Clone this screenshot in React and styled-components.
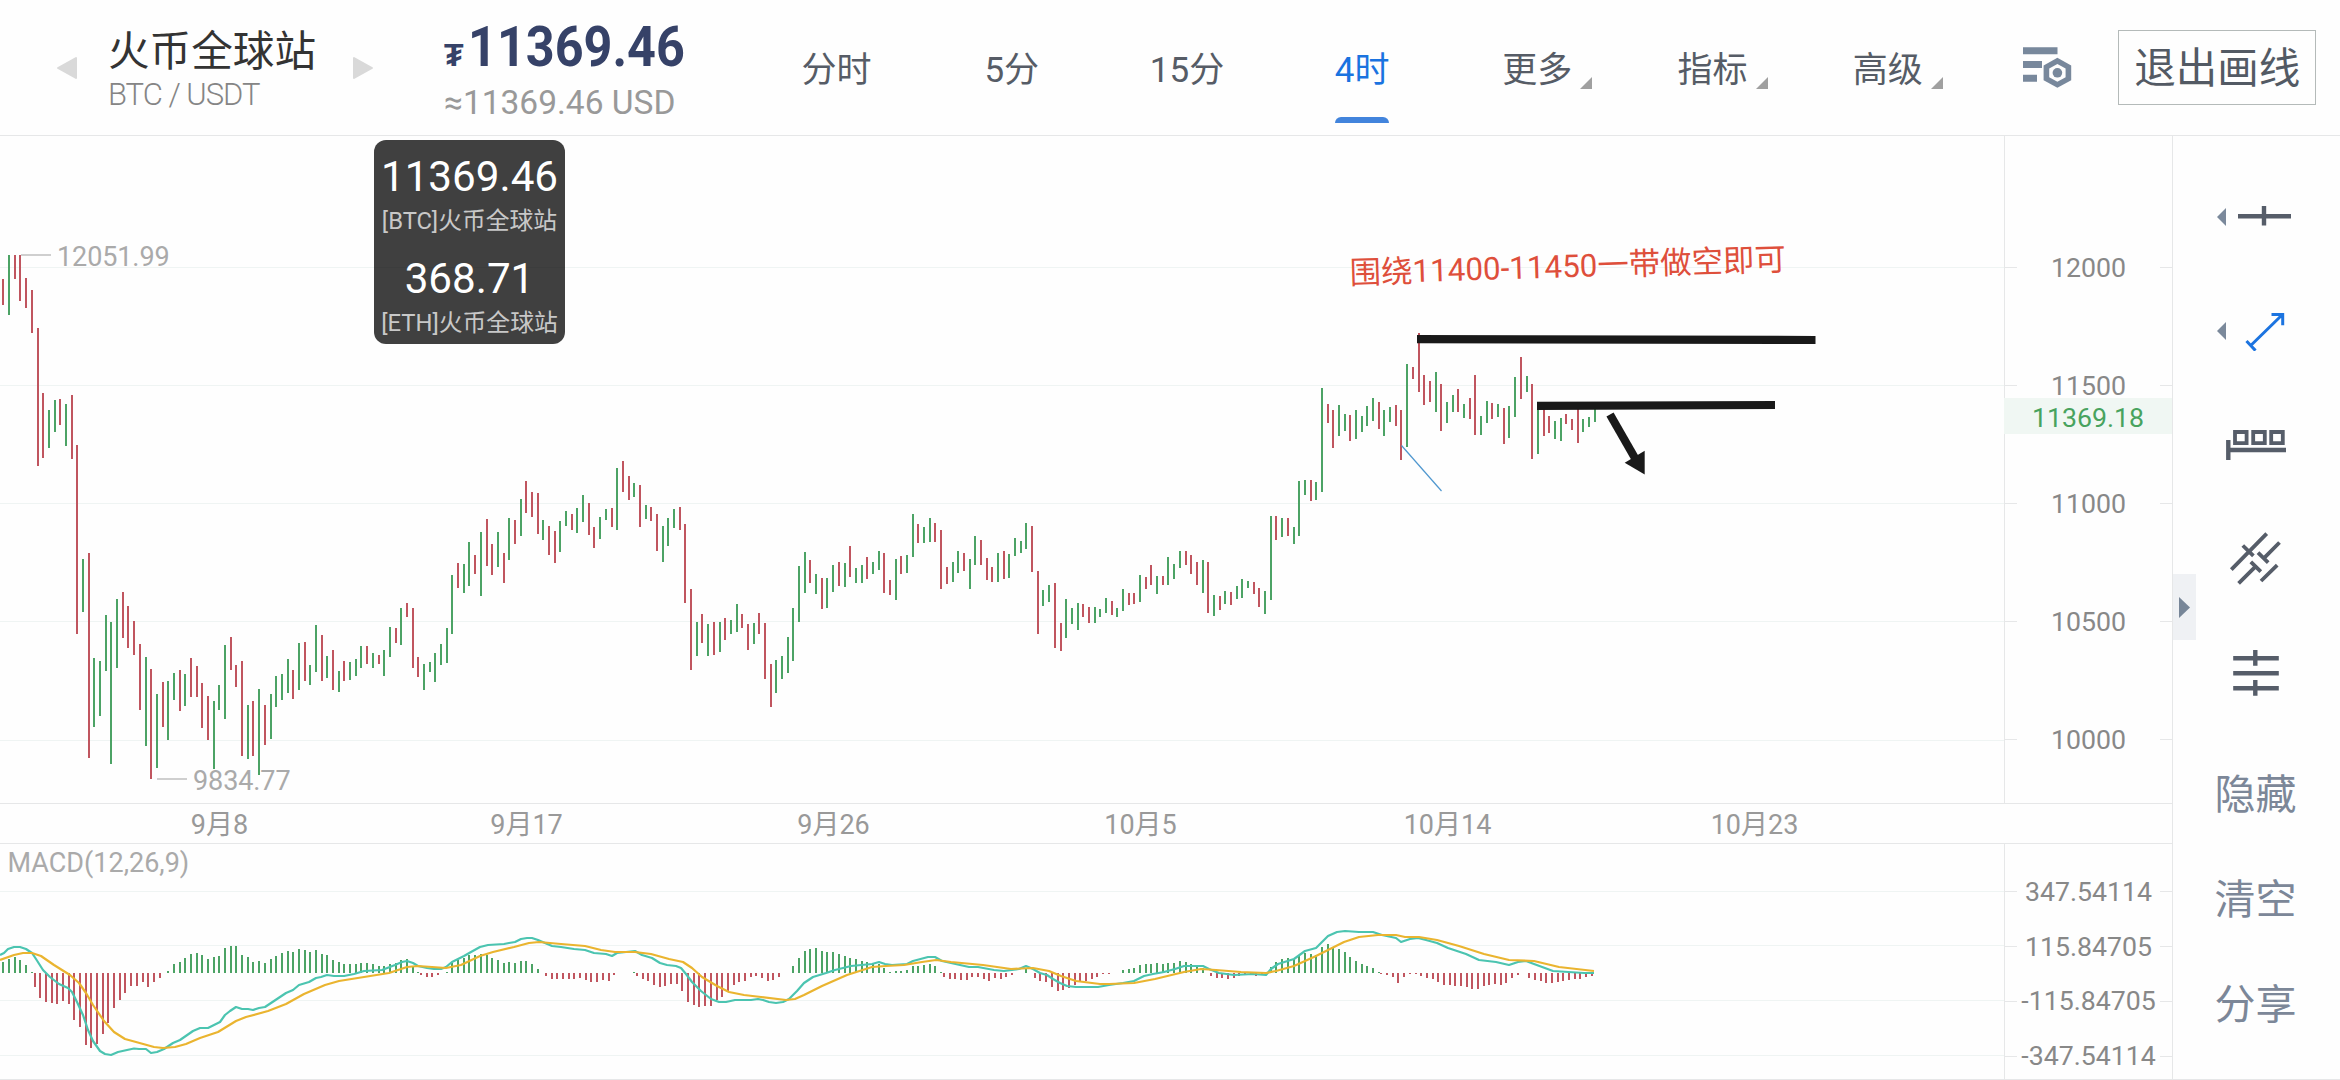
import React from 'react';
import styled, { createGlobalStyle } from 'styled-components';

const GlobalStyle = createGlobalStyle`
    body {
        margin: 0;
        background: #fefefe;
        font-family: Roboto, 'Noto Sans CJK SC', sans-serif;
    }
`;

const GREEN = '#4ca365';
const RED = '#c0555f';
const LINE = '#e6e7e8';
const GRID = '#eff4f3';

// x, high, low, up
const candles = [
    [3,279,305,0],[9,255,315,1],[15,255,279,0],[20,255,301,0],[26,278,308,0],[32,290,333,0],[38,328,466,0],
    [43,393,458,0],[49,410,448,1],[55,400,432,1],[60,399,425,0],[66,404,446,1],[72,395,459,0],[77,445,634,0],
    [83,559,612,1],[89,553,758,0],[94,658,727,1],[100,661,716,1],[106,615,671,1],[111,622,764,1],[117,599,668,1],
    [123,592,638,0],[128,606,648,0],[134,621,655,0],[140,644,710,0],[146,657,746,1],[151,669,779,0],[157,694,768,1],
    [163,682,727,0],[168,681,740,1],[174,673,700,1],[180,670,711,0],[185,674,706,1],[191,658,697,0],[197,666,697,0],
    [202,683,728,0],[208,696,740,0],[214,701,769,1],[219,685,710,1],[225,645,719,1],[231,637,670,0],[236,665,687,0],
    [242,661,756,0],[248,705,759,1],[253,701,756,0],[259,689,775,1],[265,705,745,0],[271,694,739,1],[276,676,707,1],
    [282,674,700,1],[288,659,693,1],[293,670,699,0],[299,643,690,1],[305,642,681,0],[310,665,685,1],[316,625,672,1],
    [322,635,681,0],[327,656,678,1],[333,650,690,0],[339,671,692,1],[344,661,681,0],[350,662,680,1],[356,659,676,1],
    [361,646,668,1],[367,646,664,0],[373,653,668,1],[379,655,664,0],[384,650,676,1],[390,627,657,1],[396,628,643,0],
    [401,608,645,1],[407,603,617,0],[413,608,668,0],[418,657,677,0],[424,664,690,1],[430,662,672,1],[435,653,682,1],
    [441,644,665,1],[447,628,663,1],[452,575,634,1],[458,563,588,0],[464,564,593,1],[469,542,586,1],[475,555,574,0],
    [481,532,596,1],[487,519,566,0],[492,544,575,0],[498,532,567,1],[504,553,583,0],[509,518,560,1],[515,520,544,0],
    [521,499,536,1],[526,481,513,0],[532,492,517,0],[538,493,534,0],[543,520,540,1],[549,526,555,0],[555,531,563,0],
    [560,521,552,1],[566,511,526,1],[572,514,530,0],[577,508,533,1],[583,495,522,1],[589,503,535,0],[594,527,548,0],
    [600,517,539,1],[606,509,520,1],[612,508,527,0],[617,468,530,1],[623,461,492,0],[629,476,500,0],[634,483,497,1],
    [640,485,527,0],[646,505,519,1],[651,507,521,0],[657,514,551,0],[663,526,562,1],[668,518,546,1],[674,509,528,1],
    [680,507,530,0],[685,524,603,0],[691,589,670,0],[697,622,656,1],[702,614,643,0],[708,624,656,1],[714,622,655,0],
    [720,622,652,1],[725,618,640,0],[731,620,634,1],[737,604,632,1],[742,614,628,0],[748,624,650,0],[754,623,644,1],
    [759,613,634,0],[765,623,679,0],[771,664,707,0],[776,660,693,1],[782,656,679,1],[788,637,673,1],[793,608,661,1],
    [799,566,622,1],[805,552,593,1],[810,560,583,0],[816,574,594,1],[822,578,609,0],[827,578,608,1],[833,565,592,1],
    [839,562,586,0],[845,563,587,1],[850,546,577,0],[856,568,583,1],[862,565,583,1],[867,557,579,0],[873,562,574,1],
    [879,551,570,1],[884,553,593,0],[890,580,595,0],[896,559,600,1],[901,556,574,0],[907,555,573,1],[913,514,557,1],
    [918,524,543,0],[924,527,543,1],[930,518,542,1],[935,523,542,0],[941,530,589,0],[947,567,584,0],[953,562,582,1],
    [958,551,573,1],[964,553,571,0],[970,559,589,1],[975,536,565,1],[981,540,565,0],[987,558,580,0],[992,567,582,0],
    [998,553,582,1],[1004,551,579,0],[1009,554,578,1],[1015,538,556,1],[1021,541,553,1],[1026,523,549,1],[1032,526,572,0],
    [1038,571,634,0],[1043,590,606,1],[1049,585,602,1],[1055,583,648,0],[1061,623,651,0],[1066,599,638,1],[1072,608,624,1],
    [1078,603,630,1],[1083,604,617,0],[1089,607,623,0],[1095,607,623,1],[1100,609,617,1],[1106,598,613,1],[1112,601,615,0],
    [1117,608,617,1],[1123,589,611,1],[1129,593,605,0],[1134,593,604,0],[1140,575,602,1],[1146,577,589,0],[1151,565,585,0],
    [1157,576,594,1],[1163,576,585,0],[1168,557,585,1],[1174,564,579,1],[1180,551,568,1],[1186,551,565,0],[1191,555,574,0],
    [1197,562,585,0],[1203,560,593,1],[1208,562,613,0],[1214,595,616,1],[1220,596,610,0],[1225,591,604,1],[1231,592,605,0],
    [1237,586,599,1],[1242,579,598,1],[1248,581,588,1],[1254,582,594,0],[1259,588,607,0],[1265,591,614,1],[1271,516,600,1],
    [1276,516,540,0],[1282,518,537,1],[1288,518,536,0],[1294,527,544,1],[1299,481,536,1],[1305,480,495,1],[1311,480,501,0],
    [1316,482,500,1],[1322,388,492,1],[1328,404,423,0],[1333,410,448,0],[1339,405,436,1],[1345,414,431,1],[1350,415,441,0],
    [1356,410,439,1],[1362,416,432,1],[1367,406,426,1],[1373,398,421,1],[1379,402,429,0],[1384,410,436,1],[1390,407,422,1],
    [1396,405,426,0],[1401,410,460,0],[1407,364,447,1],[1413,367,379,0],[1419,333,392,0],[1424,375,405,0],[1430,381,402,0],
    [1436,372,412,1],[1441,384,431,0],[1447,402,423,1],[1453,395,412,1],[1458,389,412,0],[1464,404,418,1],[1470,398,419,0],
    [1475,375,435,0],[1481,416,435,1],[1487,401,423,1],[1492,403,419,0],[1498,404,417,1],[1504,408,444,0],[1509,406,438,1],
    [1515,377,417,1],[1521,357,399,0],[1527,376,392,1],[1532,384,459,0],[1538,405,454,1],[1544,405,436,0],[1549,416,433,0],
    [1555,421,439,1],[1561,418,441,1],[1566,414,424,0],[1572,419,430,0],[1578,409,443,0],[1583,419,432,1],[1589,417,427,1],
    [1595,409,422,1],
];

// one MACD histogram value per candle
const histogram = [
    11,14,16,13,8,1,
    -14,-25,-29,-30,-31,-28,-31,-47,-54,-72,-75,-71,-61,-50,-35,-27,-20,-13,-13,-9,-14,-9,-5,
    2,9,11,15,19,20,18,14,16,17,25,27,27,18,16,11,12,10,14,17,20,22,21,24,23,21,23,19,18,13,11,
    9,9,9,10,10,9,7,7,9,10,13,14,6,1,-2,-4,-4,-2,1,10,13,15,18,18,19,18,15,13,10,11,10,12,12,9,4,0,
    -3,-6,-6,-6,-6,-6,-5,-7,-9,-9,-7,-8,-2,0,0,1,
    -3,-6,-8,-12,-14,-13,-11,-11,-18,-29,-32,-34,-33,-33,-27,-24,-19,-12,-9,-8,-4,-3,-5,-8,-7,-4,0,
    7,15,22,24,25,22,21,21,19,17,15,14,12,11,10,9,5,1,2,2,3,7,7,8,9,7,1,
    -4,-6,-6,-7,-7,-4,-4,-6,-8,-5,-6,-4,-2,0,4,0,-5,-8,-9,-14,-18,-17,-15,-12,-8,-8,-6,-4,-1,-1,0,
    3,4,5,8,9,9,10,9,10,10,12,11,9,6,5,0,-3,-5,-5,-6,-5,-3,-2,-1,-3,-2,
    6,11,14,15,14,18,20,19,18,26,29,26,24,21,16,12,9,7,5,1,
    -1,-2,-4,-10,-4,-1,-1,-3,-5,-6,-9,-12,-12,-13,-13,-14,-16,-16,-13,-12,-11,-12,-10,-5,-2,0,
    -5,-7,-8,-10,-10,-9,-8,-7,-6,-6,-4,-3,
];

const difLine = `0,955 4,953 8,949 14,947 20,947 26,949 32,953 36,959 43,970 50,977 59,984 68,988 72,992 77,1002 83,1015
    88,1030 93,1041 100,1051 105,1054 111,1055 118,1052 127,1050 134,1048.5 139,1049 146,1049 151,1053 157,1052 164,1049
    173,1043 180,1040 193,1031 200,1028 208,1028 214,1025 220,1022 225,1015 230,1011 236,1007 242,1009 248,1009 253,1010
    259,1008 265,1007 271,1003 286,993 293,990 299,985 309,982 316,978 321,977 327,975 334,976 344,976 354,974 364,971
    382,970 395,965 402,962 407,961 413,963 418,966 427,968 434,969 441,969 446,967 452,962 458,959 464,956 471,952
    480,947 488,945 504,944 509,943 515,942 521,939 527,938 532,938 538,940 552,946 561,947 574,949 585,950 594,953
    606,954 612,956 617,953 626,952 635,951 642,955 652,958 660,963 667,965 676,966 681,968 686,974 692,982 701,991
    711,999 719,1002 726,1002 735,1000 751,1000 758,999 763,1000 769,1002 776,1003 783,1002 789,999 797,991 804,983
    813,977 826,973 835,970 851,966 872,964 879,962 885,964 892,965 907,964 913,961 928,957 935,957 942,961 951,963
    969,967 978,967 994,970 1004,971 1019,969 1026,966 1033,969 1040,973 1047,975 1053,979 1060,983 1067,986 1076,987
    1098,987 1109,985 1123,983 1134,981 1144,976 1153,974 1164,972 1175,969 1184,966 1203,966 1209,969 1219,973
    1234,975 1253,974 1266,975 1271,969 1278,964 1294,959 1305,951 1316,948 1322,942 1328,936 1337,932 1345,931
    1359,932 1373,932 1382,935 1396,938 1401,942 1410,939 1418,938 1426,940 1437,943 1448,948 1466,954 1479,960
    1496,962 1509,965 1518,962 1526,961 1534,964 1553,971 1584,973 1594,973`;

const deaLine = `0,960 14,955 23,953 32,953 41,956 54,965 70,975 79,983 86,993 93,1005 104,1021 114,1032 125,1039 136,1042
    154,1047 163,1048 175,1047 186,1044 200,1038 218,1032 236,1021 246,1017 268,1011 286,1004 304,994 325,985 339,981
    364,977 389,973 407,967 418,966 446,968 461,965 480,956 493,952 514,947 529,943 539,942 561,944 585,946 601,950
    615,952 635,952 651,954 669,959 683,962 692,968 702,977 717,986 729,992 744,995 761,997 786,1000 795,999 804,995
    822,986 847,975 872,967 886,966 904,965 922,962 936,960 951,962 983,965 1011,969 1033,968 1049,971 1061,976
    1076,981 1100,984 1109,984 1134,983 1155,979 1184,972 1201,969 1216,970 1241,972 1266,973 1276,971 1294,966
    1316,956 1326,951 1344,942 1359,937 1378,935 1396,935 1405,937 1419,937 1437,940 1459,946 1484,954 1509,960
    1534,961 1559,967 1594,971`;

const Page = styled.div`
    display: flex;
    flex-direction: column;
    width: 2340px;
    height: 1080px;
    box-sizing: border-box;
    overflow: hidden;
    border-bottom: 1px solid ${LINE};
`;

const Header = styled.header`
    display: flex;
    align-items: center;
    height: 135px;
    flex: none;
    border-bottom: 1px solid ${LINE};
`;

const Market = styled.div`
    display: flex;
    align-items: center;
    width: 388px;
    padding-left: 56px;
    box-sizing: content-box;
`;

const MarketName = styled.div`
    width: 244px;
    margin-left: 30px;
`;

const Exchange = styled.div`
    font-size: 41.6px;
    line-height: 52px;
    margin-top: 3px;
    color: #333;
`;

const Pair = styled.div`
    font-size: 31px;
    line-height: 34px;
    font-weight: 300;
    letter-spacing: -1px;
    color: #858585;
`;

const Quote = styled.div`
    width: 305px;
`;

const LastPrice = styled.div`
    display: flex;
    align-items: baseline;
    height: 62px;
    line-height: 62px;
    margin-top: 5px;
    font-weight: 700;
    color: #364268;
    white-space: nowrap;
`;

const Tether = styled.span`
    width: 24px;
    font-size: 32px;
`;

const PriceDigits = styled.span`
    font-size: 55.5px;
    transform: scaleX(0.907);
    transform-origin: left;
`;

const UsdPrice = styled.div`
    font-size: 33.5px;
    line-height: 40px;
    margin-top: 4px;
    color: #999;
`;

const Tabs = styled.nav`
    display: flex;
    height: 100%;
`;

const Tab = styled.div`
    display: flex;
    flex-direction: column;
    align-items: center;
    justify-content: flex-end;
    width: 175.2px;
    font-size: 35px;
    line-height: 50px;
    color: ${props => props.$active ? '#1a73e0' : '#565c66'};
`;

const TabLabel = styled.div`
    position: relative;
`;

const Corner = styled.svg`
    position: absolute;
    right: -20px;
    bottom: 7px;
`;

const Underline = styled.div`
    width: 54px;
    height: 6px;
    margin: 21px 0 12px;
    border-radius: 6px 6px 0 0;
    background: ${props => props.$active ? '#4284dc' : 'transparent'};
`;

const SettingsIcon = styled.svg`
    margin-left: 48px;
`;

const ExitButton = styled.button`
    width: 198px;
    height: 75px;
    margin-left: 46px;
    padding: 3px 0 0;
    border: 1px solid #b4bab9;
    background: none;
    font: 41.5px/1 Roboto, 'Noto Sans CJK SC', sans-serif;
    color: #535a64;
`;

const Body = styled.main`
    display: flex;
    flex: 1;
    position: relative;
`;

const Charts = styled.section`
    width: 2172px;
    border-right: 1px solid ${LINE};
`;

const Panel = styled.div`
    display: flex;
    position: relative;
    height: ${props => props.$height}px;
`;

const Plot = styled.svg`
    display: block;
    flex: none;
`;

const Axis = styled.div`
    width: 168px;
    padding-top: ${props => props.$top}px;
    box-sizing: border-box;
    border-left: 1px solid ${LINE};
`;

const Tick = styled.div`
    display: flex;
    align-items: center;
    justify-content: space-between;
    height: ${props => props.$height}px;
    font-size: 26.7px;
    color: #888;

    &::before,
    &::after {
        content: '';
        width: 12px;
        height: 1px;
        background: ${LINE};
    }
`;

const CurrentPrice = styled.div`
    position: absolute;
    left: 2004px;
    top: 262px;
    width: 168px;
    height: 36px;
    background: #f0f7f3;
    color: #48a35e;
    font-size: 26.7px;
    line-height: 40px;
    text-align: center;
`;

const DateAxis = styled.div`
    display: flex;
    height: 39px;
    padding-left: 66px;
    border-top: 1px solid ${LINE};
    border-bottom: 1px solid ${LINE};
`;

const DateLabel = styled.div`
    width: 307px;
    font-size: 27px;
    line-height: 42px;
    text-align: center;
    color: #999;
`;

const Tooltip = styled.div`
    position: absolute;
    left: 374px;
    top: 4px;
    width: 191px;
    height: 204px;
    border-radius: 12px;
    background: rgba(0, 0, 0, 0.75);
    text-align: center;
    white-space: nowrap;
`;

const TipPrice = styled.div`
    height: 46px;
    padding-top: 14px;
    font-size: 42.2px;
    line-height: 46px;
    color: #fff;
`;

const TipName = styled.div`
    height: 42px;
    font-size: 23.8px;
    line-height: 43px;
    color: #c8c8c8;
`;

const Tools = styled.aside`
    display: flex;
    flex-direction: column;
    width: 165px;
    padding: 24px 2px 0 0;
`;

const Tool = styled.div`
    display: flex;
    align-items: center;
    justify-content: center;
    height: 114px;
`;

const ToolActions = styled.div`
    padding-top: 12.5px;
`;

const ToolAction = styled.div`
    height: 105px;
    font-size: 41px;
    line-height: 105px;
    text-align: center;
    color: #7c8798;
`;

const Handle = styled.div`
    position: absolute;
    left: 2173px;
    top: 438px;
    display: flex;
    align-items: center;
    padding-left: 6px;
    width: 17px;
    height: 66px;
    background: #eff1f4;
`;

const tabs = [
    { label: '分时' },
    { label: '5分' },
    { label: '15分' },
    { label: '4时', active: true },
    { label: '更多', menu: true },
    { label: '指标', menu: true },
    { label: '高级', menu: true },
];

function ArrowIcon({ right }) {
    return (
        <svg width="22" height="24" viewBox="0 0 22 24">
            <path
                d={right ? 'M2 2v20L20 12z' : 'M20 2v20L2 12z'}
                fill="#d9d9d9" stroke="#d9d9d9" strokeWidth="2" strokeLinejoin="round"
            />
        </svg>
    );
}

function TopBar() {
    return (
        <Header>
            <Market>
                <ArrowIcon />
                <MarketName>
                    <Exchange>火币全球站</Exchange>
                    <Pair>BTC / USDT</Pair>
                </MarketName>
                <ArrowIcon right />
            </Market>
            <Quote>
                <LastPrice>
                    <Tether>₮</Tether>
                    <PriceDigits>11369.46</PriceDigits>
                </LastPrice>
                <UsdPrice>≈11369.46 USD</UsdPrice>
            </Quote>
            <Tabs>
                {tabs.map(tab => (
                    <Tab key={tab.label} $active={tab.active}>
                        <TabLabel>
                            {tab.label}
                            {tab.menu && (
                                <Corner width="12" height="12"><path d="M12 0v12H0z" fill="#a0a0a0" /></Corner>
                            )}
                        </TabLabel>
                        <Underline $active={tab.active} />
                    </Tab>
                ))}
            </Tabs>
            <SettingsIcon width="49" height="42" viewBox="2023 48 49 42" fill="#78889c">
                <path d="M2023 48.3h34.5v7H2023zM2023 62h19v7h-19zM2023 75.7h14v7h-14z" />
                <path d="M2057.4 58.8l13.8 7.6v14.8l-13.8 7.6-13.8-7.6V66.4z" />
                <path d="M2057.4 65l8.2 4.6v8.6l-8.2 4.6-8.2-4.6v-8.6z" fill="#fefefe" />
                <circle cx="2057.4" cy="73.8" r="4.8" />
            </SettingsIcon>
            <ExitButton>退出画线</ExitButton>
        </Header>
    );
}

function PriceChart() {
    return (
        <Plot width="2004" height="667" viewBox="0 136 2004 667">
            {[267, 385, 503, 621, 740].map(y => (
                <rect key={y} x="0" y={y} width="2004" height="1" fill={GRID} />
            ))}
            {candles.map(([x, high, low, up]) => (
                <rect key={x} x={x - 1} y={high} width="2" height={low - high} fill={up ? GREEN : RED} />
            ))}
            <g fill="#aaa" fontSize="27" letterSpacing="-0.1">
                <rect x="21" y="254" width="30" height="2" fill="#cfcfcf" />
                <text x="57" y="266">12051.99</text>
                <rect x="157" y="778" width="30" height="2" fill="#cfcfcf" />
                <text x="193" y="790">9834.77</text>
            </g>
            <line x1="1401.5" y1="445.5" x2="1441.5" y2="491" stroke="#4f97cf" strokeWidth="1.2" />
            <g stroke="#191919" strokeWidth="8.2">
                <line x1="1417" y1="339.2" x2="1815.5" y2="340" />
                <line x1="1537" y1="405.8" x2="1775" y2="405" />
                <line x1="1610" y1="414.5" x2="1635.5" y2="459" />
            </g>
            <path d="M1624.7 462.7l20-12v23.8z" fill="#191919" />
            <text x="1350" y="284" fontSize="31.4" fill="#de4f3b" transform="rotate(-1.8 1350 284)">
                围绕11400-11450一带做空即可
            </text>
        </Plot>
    );
}

function MacdChart() {
    return (
        <Plot width="2004" height="235" viewBox="0 844 2004 235">
            {[891, 945, 1000, 1055].map(y => (
                <rect key={y} x="0" y={y} width="2004" height="1" fill={GRID} />
            ))}
            {histogram.map((value, i) => (
                <rect
                    key={i}
                    x={value > 0 ? candles[i][0] - 1 : candles[i][0] - 4}
                    y={value > 0 ? 973 - value : 973}
                    width="2"
                    height={Math.abs(value)}
                    fill={value > 0 ? GREEN : RED}
                />
            ))}
            <g fill="none" strokeWidth="2.2" strokeLinejoin="round">
                <polyline points={difLine} stroke="#4bc4b0" />
                <polyline points={deaLine} stroke="#eab42f" />
            </g>
            <text x="7.5" y="872" fontSize="27" fill="#aaa">MACD(12,26,9)</text>
        </Plot>
    );
}

function DrawingTools() {
    const stroke = { fill: 'none', stroke: '#565d69', strokeWidth: 4.4 };
    return (
        <Tools>
            <Tool>
                <svg width="80" height="40" viewBox="2216 197 80 40">
                    <path d="M2226 208v18l-9-9z" fill="#7b899b" />
                    <path d="M2238 216.3h53M2264 206v19.5" {...stroke} />
                </svg>
            </Tool>
            <Tool>
                <svg width="80" height="40" viewBox="2216 311 80 40">
                    <path d="M2226 322v18l-9-9z" fill="#7b899b" />
                    <path d="M2250.5 345.8L2282 315M2271.5 314.6h11.2v10.6M2246.5 341l9 9.6" fill="none" stroke="#1c74e0" strokeWidth="3" />
                </svg>
            </Tool>
            <Tool>
                <svg width="62" height="40" viewBox="2225 425 62 40">
                    <path d="M2228.3 440v20M2230 450h56" {...stroke} />
                    <path d="M2235 432h11.6v11.2H2235zM2253.2 432h11.6v11.2h-11.6zM2271.2 432h11.6v11.2h-11.6z" {...stroke} strokeWidth="3.8" />
                </svg>
            </Tool>
            <Tool>
                <svg width="60" height="60" viewBox="2226 529 60 60">
                    <path
                        d="M2231.3 569.6L2266.7 533.6M2242.8 545.5l10.6 10.4M2264 558.2l15.5-15.7M2258 552.7l10.2 10
                           M2238.6 583.4l16.6-16.6M2250.8 561.8l10 9.8M2261 581l16.2-15.8"
                        {...stroke} strokeWidth="3.8"
                    />
                </svg>
            </Tool>
            <Tool>
                <svg width="60" height="60" viewBox="2226 643 60 60">
                    <path d="M2233.2 658.3h45.6M2233.2 673.3h45.6M2233.2 688.3h45.6M2255.3 650v15.7M2255.3 680v15.7" {...stroke} />
                </svg>
            </Tool>
            <ToolActions>
                <ToolAction>隐藏</ToolAction>
                <ToolAction>清空</ToolAction>
                <ToolAction>分享</ToolAction>
            </ToolActions>
        </Tools>
    );
}

function App() {
    return (
        <Page>
            <GlobalStyle />
            <TopBar />
            <Body>
                <Charts>
                    <Panel $height={667}>
                        <PriceChart />
                        <Axis $top={72.5}>
                            {['12000', '11500', '11000', '10500', '10000'].map(price => (
                                <Tick key={price} $height={118.1}>{price}</Tick>
                            ))}
                        </Axis>
                        <CurrentPrice>11369.18</CurrentPrice>
                        <Tooltip>
                            <TipPrice>11369.46</TipPrice>
                            <TipName>[BTC]火币全球站</TipName>
                            <TipPrice>368.71</TipPrice>
                            <TipName>[ETH]火币全球站</TipName>
                        </Tooltip>
                    </Panel>
                    <DateAxis>
                        {['9月8', '9月17', '9月26', '10月5', '10月14', '10月23'].map(date => (
                            <DateLabel key={date}>{date}</DateLabel>
                        ))}
                    </DateAxis>
                    <Panel $height={235}>
                        <MacdChart />
                        <Axis $top={20.5}>
                            {['347.54114', '115.84705', '-115.84705', '-347.54114'].map(value => (
                                <Tick key={value} $height={54.8}>{value}</Tick>
                            ))}
                        </Axis>
                    </Panel>
                </Charts>
                <DrawingTools />
                <Handle>
                    <svg width="11" height="21"><path d="M0 0l11 10.5L0 21z" fill="#778698" /></svg>
                </Handle>
            </Body>
        </Page>
    );
}

export default App;
